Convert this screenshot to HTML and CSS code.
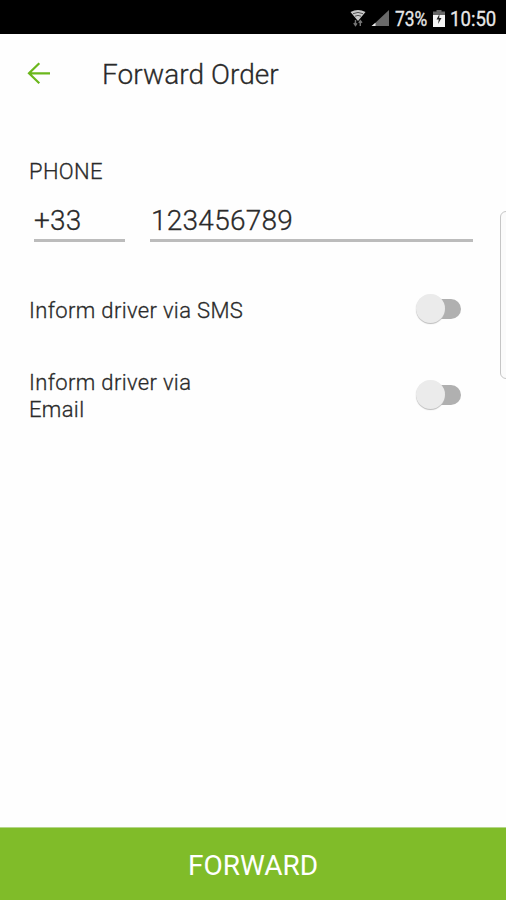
FILE: index.html
```html
<!DOCTYPE html>
<html lang="en">
<head>
<meta charset="utf-8">
<title>Forward Order</title>
<link rel="stylesheet" href="styles.css">
</head>
<body>
<div class="screen">
  <div class="status">
    <svg class="status-icons" width="42" height="20" viewBox="0 0 42 20">
      <path d="M.5 3Q8 -1 15.500 3L8 12Z" fill="#c8c8c8"/>
      <path d="M3 4.700q5-2.600 10 0M5 7.200q3-1.600 6 0" fill="none" stroke="#333" stroke-width=".8"/>
      <path d="M5.500 11v5m-1.700-2L5.500 16.500 7 14.300M10.300 17v-5m-1.500 1.800 1.500-2.100 1.700 2.100" fill="none" stroke="#747474" stroke-width="1.400"/>
      <path d="M39 1v16H22Z" fill="#696969"/>
      <path d="M25.500 13.800V17h-4Z" fill="#eee"/>
    </svg>
    <span class="percent">73%</span>
    <svg class="battery" width="12" height="18" viewBox="0 0 12 18">
      <path d="M3.500 1.500V0h5v1.500H12V6H0V1.500Z" fill="#666"/>
      <path d="M0 5h12v12H0Z" fill="#f4f4f4"/>
      <path d="M6.500 4 3.500 9.500h2.300L5 14l3.500-6H6.200Z" fill="#222"/>
    </svg>
    <span class="clock">10:50</span>
  </div>
  <header class="toolbar">
    <svg class="back" width="24" height="24" viewBox="0 0 24 24">
      <path d="M12.300 2.200 2 12.300l10.300 9.900M2 12.300h21" fill="none" stroke="#6bb71c" stroke-width="2.200"/>
    </svg>
    <h1 class="title">Forward Order</h1>
  </header>
  <main class="form">
    <div class="label">PHONE</div>
    <div class="phone">
      <div class="field code">+33</div>
      <div class="field number">123456789</div>
    </div>
    <div class="option sms">
      <span class="option-text">Inform driver via SMS</span>
      <span class="switch"><span class="thumb"></span></span>
    </div>
    <div class="option email">
      <span class="option-text">Inform driver via<br>Email</span>
      <span class="switch"><span class="thumb"></span></span>
    </div>
  </main>
  <div class="forward">FORWARD</div>
  <div class="edge"></div>
</div>
</body>
</html>
```
FILE: styles.css
```css
* { box-sizing: border-box; }
body { margin: 0; font-family: Roboto, sans-serif; color: #2a2a2a; background: #fff; }
.screen { position: relative; display: flex; flex-direction: column; width: 506px; height: 900px; overflow: hidden; background: #fefefe; }
.status { display: flex; align-items: center; justify-content: flex-end; height: 34px; padding: 4px 9px 0 0; background: #000; color: #e8e8e8; font-size: 21px; line-height: 30px; }
.status-icons { margin-right: 3px; }
.percent { width: 35px; white-space: nowrap; transform: scaleX(.83); transform-origin: left; }
.battery { margin: 0 5px 0 3px; }
.clock { width: 47px; white-space: nowrap; transform: scaleX(.885); transform-origin: left; }
.percent, .clock { -webkit-text-stroke: .3px #e8e8e8; }
.toolbar { display: flex; align-items: center; height: 80px; padding-left: 27px; }
.back { margin-right: 51px; margin-top: -2px; }
.title { margin: 2px 0 0; font-size: 28px; font-weight: 300; line-height: 36px; letter-spacing: .05px; white-space: nowrap; -webkit-text-stroke: .3px #2a2a2a; }
.form { flex: 1; padding: 44px 33px 0 29px; font-weight: 300; -webkit-text-stroke: .3px #2a2a2a; }
.label { font-size: 22px; line-height: 27px; letter-spacing: .35px; }
.phone { display: flex; gap: 25px; margin: 14px 0 0 5px; }
.field { height: 43px; padding-top: 1px; border-bottom: 3px solid #bcbcbc; font-size: 28px; line-height: 42px; letter-spacing: .25px; }
.code { width: 91px; }
.number { width: 323px; flex: none; padding-left: 1px; }
.option { display: flex; align-items: center; justify-content: space-between; padding-right: 12px; font-size: 22px; line-height: 27px; letter-spacing: .35px; }
.option-text { white-space: nowrap; }
.sms { margin-top: 55px; }
.email { margin-top: 45px; }
.switch { position: relative; top: -1px; width: 36px; height: 20px; border-radius: 10px; background: #b0b0b0; }
.sms .switch { top: -2px; }
.thumb { position: absolute; left: -9px; top: -5px; width: 29px; height: 29px; border-radius: 50%; background: #ebebeb; box-shadow: 0 1px 1px #bbb; }
.forward { height: 73px; border-top: 1px solid #b5d68b; background: #80bc29; color: #fff; font-size: 28px; line-height: 75px; text-align: center; }
.edge { position: absolute; right: -10px; top: 211px; width: 16px; height: 168px; border: 1px solid #c6c6c6; border-radius: 6px; background: #fbfbfb; }
```
